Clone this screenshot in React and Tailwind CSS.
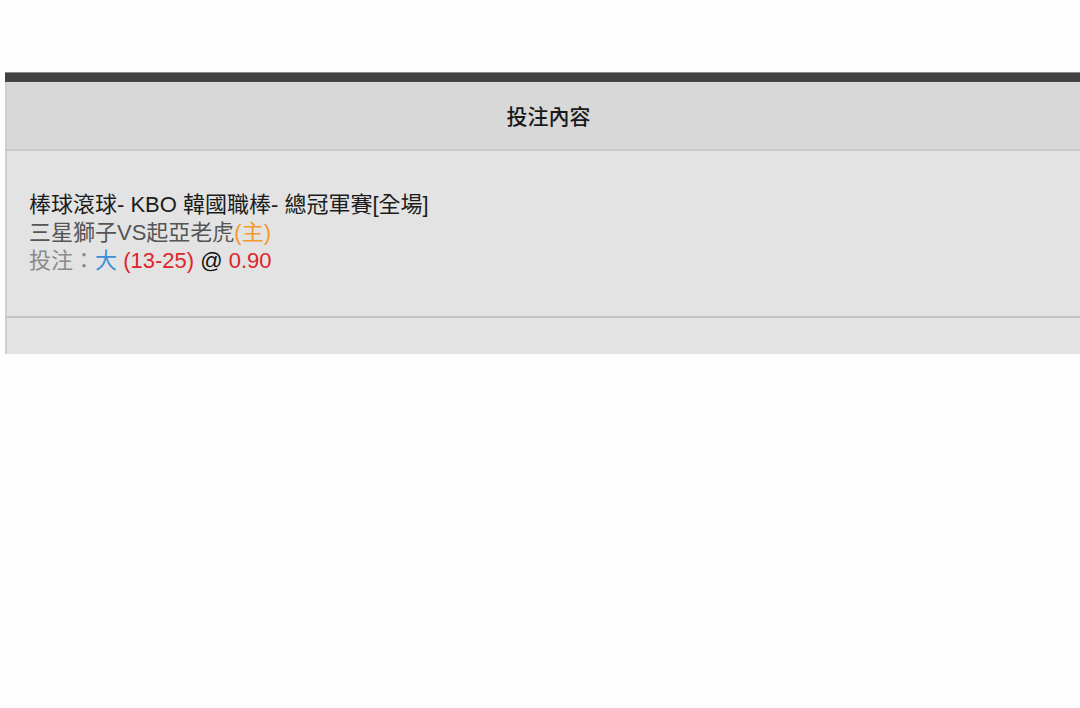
export default function App() {
  return (
    <div
      className="min-h-[708px] w-full overflow-hidden bg-[#fefefe] pt-[72px]"
      style={{ fontFamily: '"Liberation Sans", "Noto Sans CJK TC", sans-serif' }}
    >
      <div className="ml-[5px] w-[1085px]">
        {/* top dark strip */}
        <div className="h-[10px] border-t border-[#8a8a8a] bg-[#424242]" />

        <table className="w-full border-collapse border-l-2 border-[#cfcfcf]">
          <thead>
            <tr>
              <th className="h-[67px] border-t border-b-2 border-t-[#e0e0e0] border-b-[#c9c9c9] bg-[#d8d8d8] text-center align-middle text-[21px] text-[#1a1a1a]">
                <span style={{ fontFamily: '"Noto Sans CJK TC", sans-serif', fontWeight: 500 }}>
                  投注內容
                </span>
              </th>
            </tr>
          </thead>
          <tbody>
            <tr>
              <td className="h-[167px] border-b-2 border-[#c4c4c4] bg-[#e3e3e3] pl-[22px] align-middle text-[22px] leading-[28px]">
                <div className="text-[#1c1c1c]">棒球滾球- KBO 韓國職棒- 總冠軍賽[全場]</div>
                <div className="text-[#555]">
                  三星獅子VS起亞老虎<span className="text-[#f29a2e]">(主)</span>
                </div>
                <div className="text-[#8a8a8a]">
                  投注：<span className="text-[#3b8fd9]">大</span>{" "}
                  <span className="text-[#e0242b]">(13-25)</span>{" "}
                  <span className="text-[#111]">@</span>{" "}
                  <span className="text-[#e0242b]">0.90</span>
                </div>
              </td>
            </tr>
            <tr>
              <td className="h-[37px] bg-[#e3e3e3]" />
            </tr>
          </tbody>
        </table>
      </div>
    </div>
  );
}
